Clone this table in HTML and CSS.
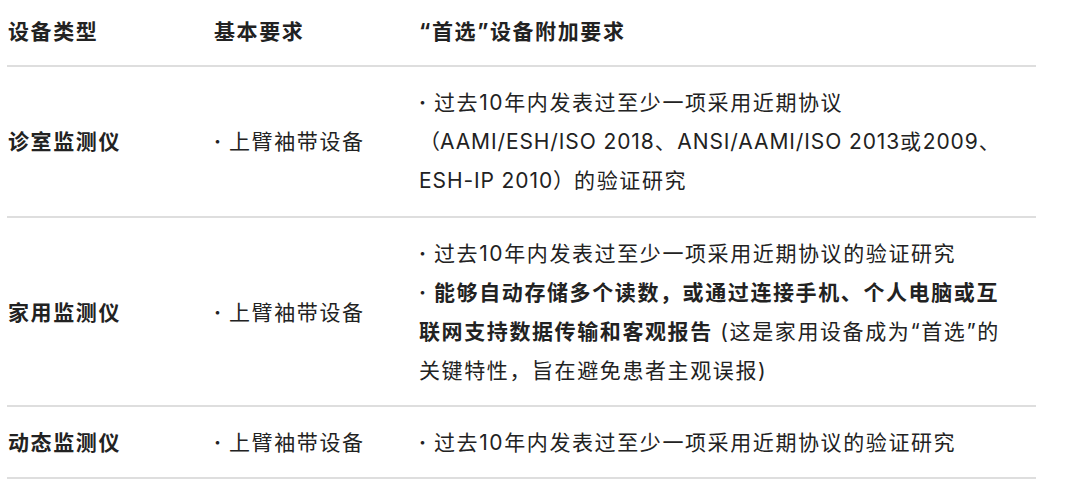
FILE: index.html
```html
<!DOCTYPE html>
<html lang="zh-CN">
<head>
<meta charset="utf-8">
<title>血压计选择要求</title>
<link rel="stylesheet" href="styles.css">
</head>
<body>
<div class="page">
  <table class="req-table">
    <colgroup>
      <col class="c-type">
      <col class="c-basic">
      <col class="c-extra">
    </colgroup>
    <thead>
      <tr>
        <th>设备类型</th>
        <th>基本要求</th>
        <th>“首选”设备附加要求</th>
      </tr>
    </thead>
    <tbody>
      <tr>
        <td class="type">诊室监测仪</td>
        <td><span class="dot">·</span>上臂袖带设备</td>
        <td class="extra"><span class="dot">·</span>过去10年内发表过至少一项采用近期协议<br><span class="paren">（</span><span class="latin">AAMI/ESH/ISO 2018</span>、<span class="latin">ANSI/AAMI/ISO 2013</span>或<span class="latin">2009</span>、<br><span class="latin">ESH-IP 2010</span><span class="paren">）</span>的验证研究</td>
      </tr>
      <tr>
        <td class="type">家用监测仪</td>
        <td><span class="dot">·</span>上臂袖带设备</td>
        <td class="extra"><span class="dot">·</span>过去10年内发表过至少一项采用近期协议的验证研究<br><strong><span class="dot">·</span>能够自动存储多个读数，或通过连接手机、个人电脑或互<br>联网支持数据传输和客观报告</strong> (这是家用设备成为“首选”的<br>关键特性，旨在避免患者主观误报)</td>
      </tr>
      <tr>
        <td class="type">动态监测仪</td>
        <td><span class="dot">·</span>上臂袖带设备</td>
        <td class="extra"><span class="dot">·</span>过去10年内发表过至少一项采用近期协议的验证研究</td>
      </tr>
    </tbody>
  </table>
</div>
</body>
</html>
```

FILE: styles.css
```css
html, body {
  margin: 0;
  padding: 0;
  background: #ffffff;
}

.page {
  padding: 0 0 0 7px;
  font-family: "Inter", "Noto Sans CJK SC", sans-serif;
  color: #222222;
  font-size: 21px;
  letter-spacing: 1.6px;
}

.req-table {
  width: 1029px;
  border-collapse: collapse;
}

.c-type { width: 206px; }
.c-basic { width: 205px; }

.req-table th,
.req-table td {
  text-align: left;
  vertical-align: middle;
  padding: 16px 0 15px 1px;
  line-height: 39px;
  border-bottom: 2px solid #dedede;
}

.req-table tbody tr:first-child td {
  padding-bottom: 16px;
}

.req-table th {
  font-weight: 700;
  padding-top: 12px;
  padding-bottom: 14px;
}

.req-table td.type {
  font-weight: 700;
}

.req-table strong {
  font-weight: 700;
}

.dot {
  display: inline-block;
  width: 15px;
  font-weight: 700;
}

.paren {
  letter-spacing: 0;
}

.latin {
  letter-spacing: 0.9px;
}
```
